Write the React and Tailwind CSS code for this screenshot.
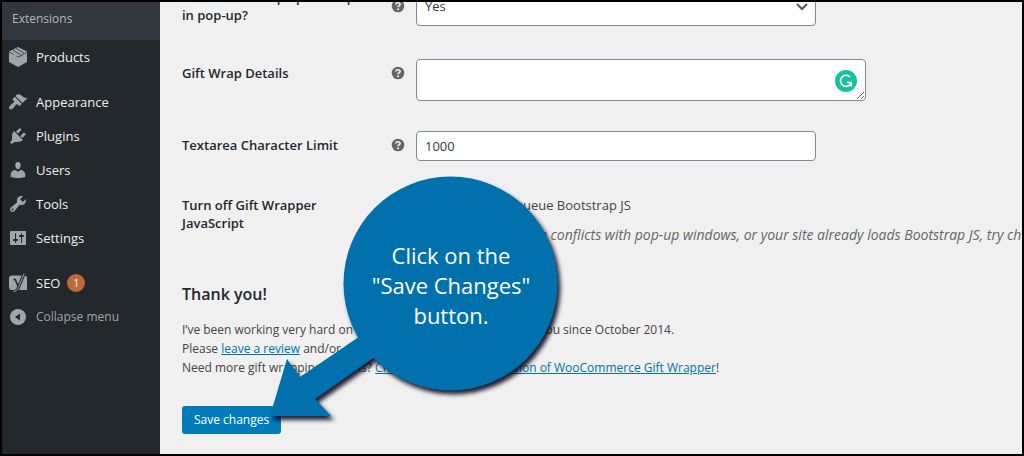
import React, { useState } from 'react';

const FONT = "font-['Open_Sans','Noto_Sans',sans-serif]";

function ProductsIcon() {
    return (
        <svg viewBox="0 0 20 20" className="w-5 h-5" fill="currentColor" aria-hidden="true">
            <path d="M10 0L19 4.600V15L10 20 1 15V4.600z" />
            <path d="M1 5l4.500 2.300M8.500 9l2 1L19 5.300M5 3l8.500 5.500M8 1.400L16 6" fill="none" stroke="#3c4147" strokeWidth=".9" />
        </svg>
    );
}

function AppearanceIcon() {
    return (
        <svg viewBox="0 0 20 20" className="w-5 h-5" fill="currentColor" aria-hidden="true">
            <path d="M14.48 11.06L7.41 3.99l1.5-1.5c.5-.56 2.3-.47 3.51.32 1.21.8 1.43 1.28 2.91 2.1 1.18.64 2.45 1.26 4.45.85zm-.71.71L6.7 4.7 4.93 6.47c-.39.39-.39 1.02 0 1.41l1.06 1.06c.39.39.39 1.03 0 1.42-.6.6-1.43 1.11-2.21 1.69-.35.26-.7.53-1.01.84C1.43 14.23.4 16.08 1.4 17.07c.99 1 2.84-.03 4.18-1.36.31-.31.58-.66.85-1.02.57-.78 1.08-1.61 1.69-2.21.39-.39 1.02-.39 1.41 0l1.06 1.06c.39.39 1.02.39 1.41 0z" />
        </svg>
    );
}

function PluginsIcon() {
    return (
        <svg viewBox="0 0 20 20" className="w-5 h-5" fill="currentColor" aria-hidden="true">
            <path d="M13.11 4.36L9.87 7.6 8 5.73l3.24-3.24c.35-.34 1.05-.2 1.56.32.52.51.66 1.21.31 1.55zm-8 1.77l.91-1.12 9.01 9.01-1.19.84c-.71.71-2.63 1.16-3.82 1.16H6.14L4.9 17.26c-.59.59-1.54.59-2.12 0-.59-.58-.59-1.53 0-2.12l1.24-1.24v-3.88c0-1.13.4-3.19 1.09-3.89zm7.26 3.97l3.24-3.24c.34-.35 1.04-.21 1.55.31.52.51.66 1.21.31 1.55l-3.24 3.25z" />
        </svg>
    );
}

function UsersIcon() {
    return (
        <svg viewBox="0 0 20 20" className="w-5 h-5" fill="currentColor" aria-hidden="true">
            <path d="M10 9.25c-2.27 0-2.73-3.44-2.73-3.44C7 4.02 7.82 2 9.97 2c2.16 0 2.98 2.02 2.71 3.81 0 0-.41 3.44-2.68 3.44zm0 2.57L12.72 10c2.39 0 4.52 2.33 4.52 4.53v2.49s-3.65 1.13-7.24 1.13c-3.65 0-7.24-1.13-7.24-1.13v-2.49c0-2.25 1.94-4.48 4.47-4.48z" />
        </svg>
    );
}

function ToolsIcon() {
    return (
        <svg viewBox="0 0 20 20" className="w-5 h-5" fill="currentColor" aria-hidden="true">
            <path d="M16.68 9.77c-1.34 1.34-3.3 1.67-4.95.99l-5.41 6.52c-.99.99-2.59.99-3.58 0s-.99-2.59 0-3.57l6.52-5.42c-.68-1.65-.35-3.61.99-4.95 1.28-1.28 3.12-1.62 4.72-1.06l-2.89 2.89 2.82 2.82 2.86-2.87c.53 1.58.18 3.39-1.08 4.65zM3.81 16.21c.4.39 1.04.39 1.43 0 .4-.4.4-1.04 0-1.43-.39-.4-1.03-.4-1.43 0-.39.39-.39 1.03 0 1.43z" />
        </svg>
    );
}

function SettingsIcon() {
    return (
        <svg viewBox="0 0 20 20" className="w-5 h-5" fill="currentColor" aria-hidden="true">
            <path d="M18 16V4c0-.55-.45-1-1-1H3c-.55 0-1 .45-1 1v12c0 .55.45 1 1 1h14c.55 0 1-.45 1-1zM8 11h1c.55 0 1 .45 1 1s-.45 1-1 1H8v1.5c0 .28-.22.5-.5.5s-.5-.22-.5-.5V13H6c-.55 0-1-.45-1-1s.45-1 1-1h1V5.5c0-.28.22-.5.5-.5s.5.22.5.5V11zm5-2h-1c-.55 0-1-.45-1-1s.45-1 1-1h1V5.5c0-.28.22-.5.5-.5s.5.22.5.5V7h1c.55 0 1 .45 1 1s-.45 1-1 1h-1v5.5c0 .28-.22.5-.5.5s-.5-.22-.5-.5V9z" />
        </svg>
    );
}

function SeoIcon() {
    return (
        <svg viewBox="0 0 20 20" className="w-5 h-5" aria-hidden="true">
            <path d="M4 2.500h12.500A2.500 2.500 0 0 1 19 5v12H4a3 3 0 0 1-3-3V5.500a3 3 0 0 1 3-3z" fill="currentColor" />
            <path d="M5.500 6.500h1.800l2.900 7" fill="none" stroke="#23282d" strokeWidth="1.600" />
            <path d="M16.200.500L10.400 14.500Q8.800 18.700 5.300 18.700" fill="none" stroke="#23282d" strokeWidth="3.200" />
            <path d="M16.200.500L10.400 14.500Q8.800 18.700 5.300 18.700" fill="none" stroke="currentColor" strokeWidth="1" />
        </svg>
    );
}

function CollapseIcon() {
    return (
        <svg viewBox="0 0 20 20" className="w-5 h-5" aria-hidden="true">
            <circle cx="10" cy="10" r="8" fill="currentColor" />
            <path d="M12 6.500v7l-5-3.500z" fill="#23282d" />
        </svg>
    );
}

const menuGroups = [
    [{ label: 'Products', Icon: ProductsIcon }],
    [
        { label: 'Appearance', Icon: AppearanceIcon },
        { label: 'Plugins', Icon: PluginsIcon },
        { label: 'Users', Icon: UsersIcon },
        { label: 'Tools', Icon: ToolsIcon },
        { label: 'Settings', Icon: SettingsIcon },
    ],
    [{ label: 'SEO', Icon: SeoIcon, count: 1 }],
];

function Sidebar() {
    return (
        <nav className="w-[158px] shrink-0 bg-[#23282d] text-[13px] leading-[18px]">
            <a href="#extensions" className="flex h-[38px] items-center bg-[#32363d] pl-[10px] pb-1 text-[12px] text-[#b4b9be]">
                Extensions
            </a>
            <div className="flex flex-col gap-[11px]">
                {menuGroups.map((group, i) => (
                    <ul key={i}>
                        {group.map(({ label, Icon, count }) => (
                            <li key={label}>
                                <a href={`#${label.toLowerCase()}`} className="flex h-[34px] items-center gap-2 pl-[6px] text-[#eee]">
                                    <span className="text-[#a0a5aa]"><Icon /></span>
                                    <span>{label}</span>
                                    {count && (
                                        <span className="-ml-px flex h-[18px] w-[18px] items-center justify-center rounded-full bg-[#bd6a38] text-[10px] text-white">
                                            {count}
                                        </span>
                                    )}
                                </a>
                            </li>
                        ))}
                    </ul>
                ))}
            </div>
            <button type="button" className="flex h-[34px] w-full items-center gap-2 pl-[6px] text-[12px] text-[#a0a5aa]">
                <CollapseIcon />
                <span>Collapse menu</span>
            </button>
        </nav>
    );
}

function HelpTip() {
    return (
        <svg viewBox="0 0 14 14" className="w-[14px] h-[14px] shrink-0" role="img" aria-label="Help">
            <circle cx="7" cy="7" r="6.300" fill="#666" />
            <path d="M5 5.500C5 3.200 9 3.200 9 5.400 9 6.700 7.100 6.600 7.100 8.300" fill="none" stroke="#f0f0f0" strokeWidth="1.700" />
            <circle cx="7.100" cy="10.300" r="1" fill="#f0f0f0" />
        </svg>
    );
}

function Grammarly() {
    return (
        <svg viewBox="0 0 22 22" className="absolute right-[9px] top-[11px] w-[22px] h-[22px]" aria-hidden="true">
            <circle cx="11" cy="11" r="11" fill="#15c39a" />
            <path d="M15.200 7A5.600 5.600 0 1 0 16 13.500M12 12.500h4.300v4.500" fill="none" stroke="#fff" strokeWidth="1.600" />
        </svg>
    );
}

function FieldLabel({ id, help, children }) {
    return (
        <div className="flex w-[223px] shrink-0 items-center justify-between text-[13px] leading-[18px] font-semibold text-[#23282d]">
            <label htmlFor={id}>{children}</label>
            {help && <HelpTip />}
        </div>
    );
}

function SettingsForm() {
    const [popup, setPopup] = useState('yes');
    const [details, setDetails] = useState('');
    const [limit, setLimit] = useState('1000');
    const [dequeue, setDequeue] = useState(false);

    return (
        <form className="-mt-[14px] min-w-0 flex-1 overflow-hidden bg-[#f0f0f0] pl-[22px] text-[13px] text-[#444]" onSubmit={(e) => e.preventDefault()}>
            <div className="flex items-start gap-[11px] pb-[18px]">
                <FieldLabel id="popup" help>
                    <span className="block whitespace-nowrap">Should the wrap options open</span>
                    <span className="block">in pop-up?</span>
                </FieldLabel>
                <div className="relative mt-2 w-[400px]">
                    <select
                        id="popup"
                        value={popup}
                        onChange={(e) => setPopup(e.target.value)}
                        className="block h-[30px] w-full appearance-none rounded-[4px] border border-[#7e8993] bg-white px-2 pb-2 text-[13px] text-[#32373c]"
                    >
                        <option value="yes">Yes</option>
                        <option value="no">No</option>
                    </select>
                    <svg viewBox="0 0 12 8" className="pointer-events-none absolute right-2 top-[7px] h-2 w-3" aria-hidden="true">
                        <path d="M1 1l5 5 5-5" fill="none" stroke="#555" strokeWidth="2" />
                    </svg>
                </div>
            </div>

            <div className="flex items-start gap-[11px] py-[15px]">
                <div className="pt-[5px]"><FieldLabel id="details" help>Gift Wrap Details</FieldLabel></div>
                <div className="relative w-[450px]">
                    <textarea
                        id="details"
                        value={details}
                        onChange={(e) => setDetails(e.target.value)}
                        className="block h-[42px] w-full resize rounded-[4px] border border-[#7e8993] bg-white px-2 py-1"
                    />
                    <Grammarly />
                </div>
            </div>

            <div className="flex items-start gap-[11px] py-[15px]">
                <div className="pt-[5px]"><FieldLabel id="limit" help>Textarea Character Limit</FieldLabel></div>
                <input
                    id="limit"
                    type="text"
                    value={limit}
                    onChange={(e) => setLimit(e.target.value)}
                    className="h-[30px] w-[400px] rounded-[4px] border border-[#7e8993] bg-white px-2 text-[13px] text-[#32373c]"
                />
            </div>

            <div className="flex items-start gap-[11px] pt-5">
                <FieldLabel id="dequeue">
                    <span className="block">Turn off Gift Wrapper</span>
                    <span className="block">JavaScript</span>
                </FieldLabel>
                <div className="whitespace-nowrap leading-[18px]">
                    <div className="flex items-center gap-3">
                        <input id="dequeue" type="checkbox" checked={dequeue} onChange={(e) => setDequeue(e.target.checked)} className="h-4 w-4" />
                        <label htmlFor="dequeue">Check to dequeue Bootstrap JS</label>
                    </div>
                    <p className="mt-3 text-[14px] italic text-[#666]">
                        When you experience conflicts with pop-up windows, or your site already loads Bootstrap JS, try checking this box.
                    </p>
                </div>
            </div>

            <h2 className="mt-[38px] text-[16px] leading-[24px] font-semibold text-[#23282d]">Thank you!</h2>
            <p className="mt-[14px] whitespace-nowrap text-[12px] leading-[19px]">
                I’ve been working very hard on this plugin and offering it free to you since October 2014.
                <br />
                Please <a href="#review" className="text-[#0073aa] underline">leave a review</a> and/or donate.
                <br />
                Need more gift wrapping options? <a href="#plus" className="text-[#0073aa] underline">Check out the Plus extension of WooCommerce Gift Wrapper</a>!
            </p>

            <button type="submit" className="mt-[29px] mb-5 h-7 rounded-[3px] bg-[#007cba] px-3 text-[12px] text-white">
                Save changes
            </button>
        </form>
    );
}

function Callout() {
    return (
        <div className="pointer-events-none absolute left-[258px] top-[164px] h-[260px] w-[320px]">
            <svg viewBox="0 0 320 260" className="h-full w-full overflow-visible drop-shadow-[3px_4px_2px_rgba(10,10,30,0.9)]" aria-hidden="true">
                <circle cx="190.500" cy="117.500" r="107" fill="#0071ad" />
                <path d="M10 250l17-57 13 18 66-45 20 17-71 50 16 17z" fill="#0071ad" />
            </svg>
            <p className="absolute left-[83px] top-[74px] w-[216px] text-center text-[22px] leading-[30px] text-white">
                Click on the<br />"Save Changes"<br />button.
            </p>
        </div>
    );
}

export default function App() {
    return (
        <div className={`relative flex min-h-screen overflow-hidden border-2 border-black bg-[#f0f0f0] ${FONT}`}>
            <Sidebar />
            <SettingsForm />
            <Callout />
        </div>
    );
}
